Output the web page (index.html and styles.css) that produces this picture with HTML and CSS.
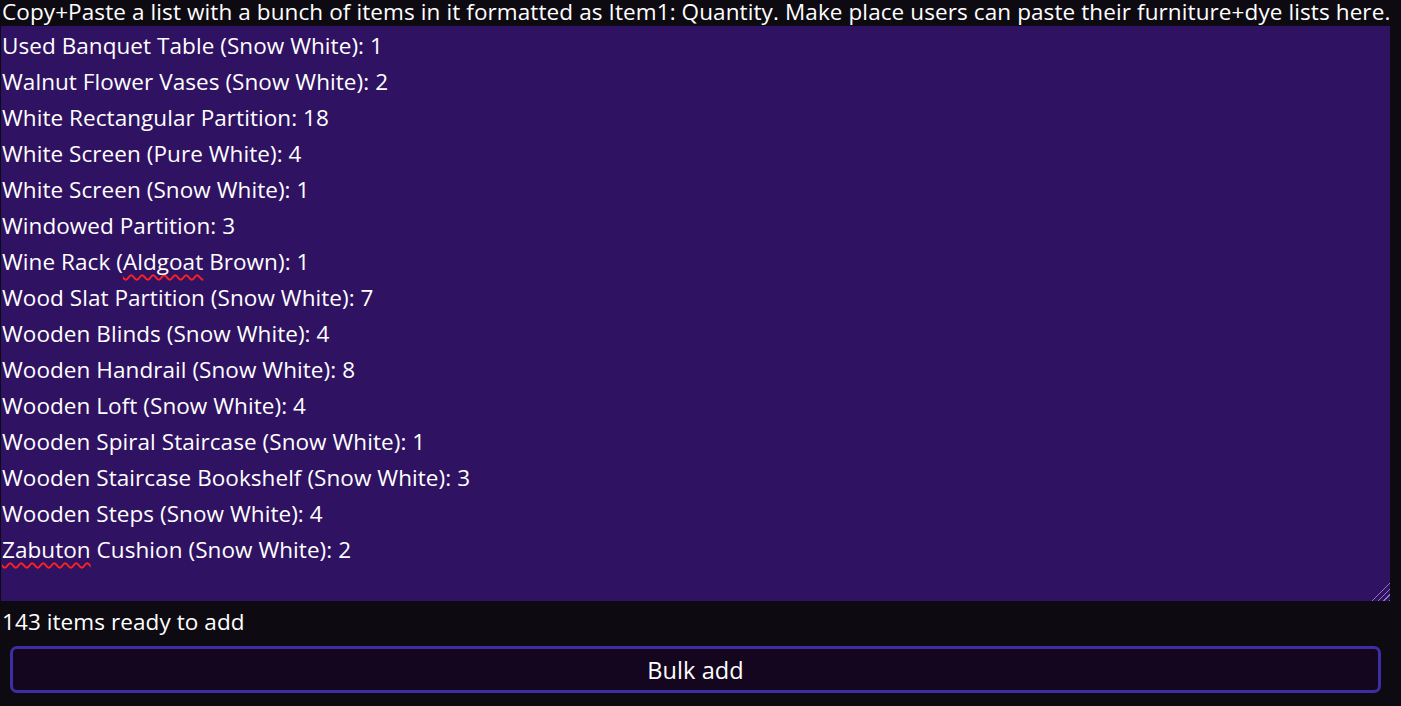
FILE: index.html
```html
<!DOCTYPE html>
<html lang="en">
<head>
<meta charset="utf-8">
<title>Bulk add</title>
<link rel="stylesheet" href="styles.css">
</head>
<body>
<main class="page">
  <p class="hint">Copy+Paste a list with a bunch of items in it formatted as Item1: Quantity. Make place users can paste their furniture+dye lists here.</p>
  <div class="paste-box">
    <div class="line">Used Banquet Table (Snow White): 1</div>
    <div class="line">Walnut Flower Vases (Snow White): 2</div>
    <div class="line">White Rectangular Partition: 18</div>
    <div class="line">White Screen (Pure White): 4</div>
    <div class="line">White Screen (Snow White): 1</div>
    <div class="line">Windowed Partition: 3</div>
    <div class="line">Wine Rack (<span class="misspelled">Aldgoat</span> Brown): 1</div>
    <div class="line">Wood Slat Partition (Snow White): 7</div>
    <div class="line">Wooden Blinds (Snow White): 4</div>
    <div class="line">Wooden Handrail (Snow White): 8</div>
    <div class="line">Wooden Loft (Snow White): 4</div>
    <div class="line">Wooden Spiral Staircase (Snow White): 1</div>
    <div class="line">Wooden Staircase Bookshelf (Snow White): 3</div>
    <div class="line">Wooden Steps (Snow White): 4</div>
    <div class="line"><span class="misspelled">Zabuton</span> Cushion (Snow White): 2</div>
    <span class="grip"></span>
  </div>
  <p class="status">143 items ready to add</p>
  <div class="actions">
    <button class="bulk-btn" type="button">Bulk add</button>
  </div>
</main>
</body>
</html>
```
FILE: styles.css
```css
html, body {
  margin: 0;
  padding: 0;
  background: #0e0a12;
}
body {
  font-family: "Open Sans", "Noto Sans", sans-serif;
  color: #ffffff;
  width: 1401px;
  height: 706px;
  overflow: hidden;
}
.page {
  display: flex;
  flex-direction: column;
  width: 1401px;
}
.hint {
  margin: 0;
  padding: 0 0 2px 2px;
  font-size: 22.5px;
  line-height: 24px;
  height: 24px;
  white-space: nowrap;
  letter-spacing: 0.1px;
}
.paste-box {
  position: relative;
  margin: 0 11px 0 1px;
  background: #301262;
  height: 575px;
  padding: 2px 0 0 1px;
  box-sizing: border-box;
  font-size: 22.5px;
  line-height: 36px;
  letter-spacing: 0.06px;
}
.line {
  white-space: nowrap;
}
.misspelled {
  text-decoration: underline wavy #ff2020;
  text-decoration-thickness: 1.6px;
  text-decoration-skip-ink: none;
  text-underline-offset: 4px;
}
.grip {
  position: absolute;
  right: 0;
  bottom: 0;
  width: 22px;
  height: 22px;
  background: repeating-linear-gradient(135deg, transparent 0 2px, #a88fd8 2px 3px, transparent 3px 4px);
  clip-path: polygon(100% 0, 100% 100%, 0 100%);
  opacity: 0.8;
}
.status {
  margin: 0;
  padding-left: 2px;
  font-size: 22.5px;
  line-height: 42px;
  height: 42px;
  letter-spacing: 0.08px;
}
.actions {
  padding: 3px 20px 0 10px;
}
.bulk-btn {
  width: 100%;
  height: 47px;
  background: #150620;
  border: 3px solid #3e2ea3;
  border-radius: 7px;
  color: #ffffff;
  font-family: inherit;
  font-size: 23.5px;
  letter-spacing: 0.08px;
  cursor: pointer;
}
```
